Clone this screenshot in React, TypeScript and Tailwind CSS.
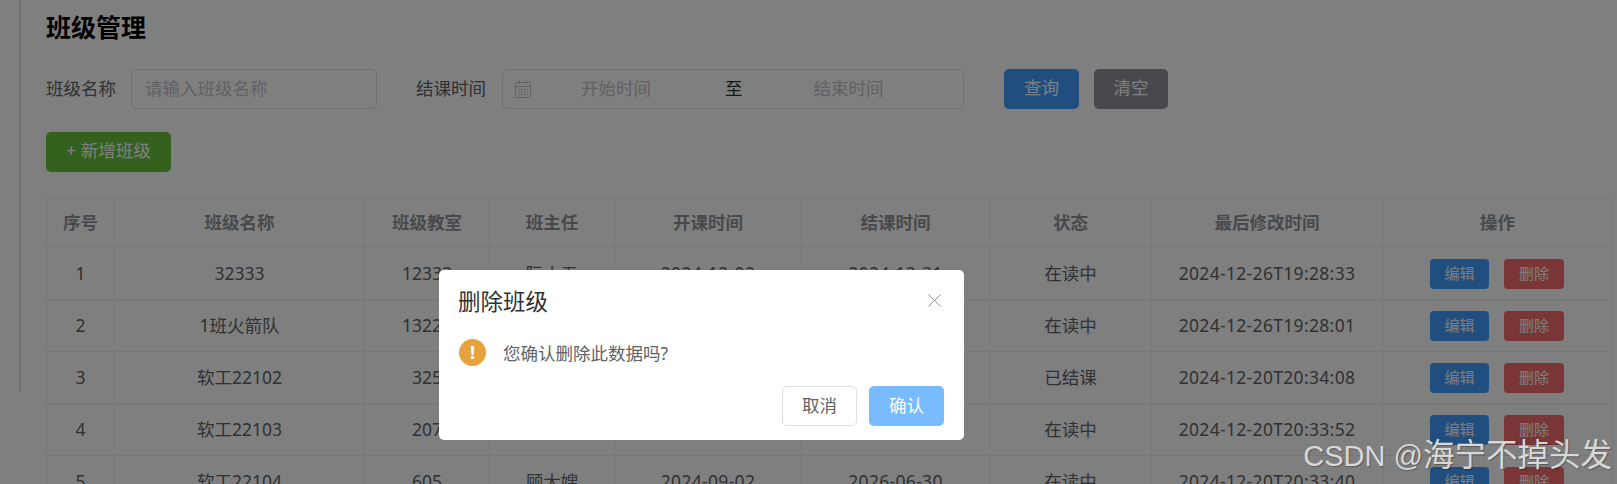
const cjk = "font-['Noto_Sans','Noto_Sans_CJK_SC',sans-serif]"

const columns = [
  { title: "序号", w: "w-[68px]" },
  { title: "班级名称", w: "w-[250px]" },
  { title: "班级教室", w: "w-[125px]" },
  { title: "班主任", w: "w-[125px]" },
  { title: "开课时间", w: "w-[187px]" },
  { title: "结课时间", w: "w-[188px]" },
  { title: "状态", w: "w-[162px]" },
  { title: "最后修改时间", w: "w-[231px]" },
  { title: "操作", w: "w-[230px]" },
]

const rows = [
  ["1", "32333", "12333", "阮小五", "2024-12-02", "2024-12-31", "在读中", "2024-12-26T19:28:33"],
  ["2", "1班火箭队", "13222", "阮小七", "2024-12-02", "2024-12-31", "在读中", "2024-12-26T19:28:01"],
  ["3", "软工22102", "325", "李逵", "2022-09-01", "2024-06-30", "已结课", "2024-12-20T20:34:08"],
  ["4", "软工22103", "207", "林冲", "2024-09-02", "2026-06-30", "在读中", "2024-12-20T20:33:52"],
  ["5", "软工22104", "605", "顾大嫂", "2024-09-02", "2026-06-30", "在读中", "2024-12-20T20:33:40"],
]

// date columns run a little wider in the reference
const dateCols = [4, 5, 7]

const App = () => {
  return (
    <div className={`relative h-[484px] w-[1617px] overflow-hidden bg-white ${cjk}`}>
      <div className="flex">
        <div className="h-[391px] w-[21px] shrink-0 border-r-2 border-[#dcdfe6]"></div>
        <div className="pl-[25px]">
          <h1 className="mt-[10px] text-[25px] leading-[34px] font-bold text-black">班级管理</h1>

          {/* Search */}
          <div className="mt-[25px] flex h-[40px] items-center text-[17.5px] text-[#606266]">
            <span className="pb-[1px]">班级名称</span>
            <div className="ml-[15px] flex h-[40px] w-[246px] items-center rounded-[5px] border border-[#dcdfe6] pb-[1px] pl-[13px] text-[#c0c4cc]">请输入班级名称</div>
            <span className="ml-[39px] pb-[1px]">结课时间</span>
            <div className="ml-[16px] flex h-[40px] w-[462px] items-center rounded-[5px] border border-[#dcdfe6] pb-[1px]">
              <svg className="ml-[12px] h-[18px] w-[16px]" viewBox="0 0 16 18" fill="none" stroke="#c0c4cc" strokeWidth="1">
                <rect x="0.5" y="2.5" width="15" height="15" rx="1" />
                <path d="M0.5 6.5h15M4.5 0.5v3M11.5 0.5v3" />
                <path d="M3 9.5h10M3 12h10M3 14.5h10" strokeDasharray="2 1" />
              </svg>
              <span className="ml-[50px] w-[70px] text-[#c0c4cc]">开始时间</span>
              <span className="ml-[74px] text-[#303133]">至</span>
              <span className="ml-[71px] w-[70px] text-[#c0c4cc]">结束时间</span>
            </div>
            <button className="ml-[40px] h-[40px] w-[75px] rounded-[5px] bg-[#409eff] pb-[3px] text-white">查询</button>
            <button className="ml-[15px] h-[40px] w-[74px] rounded-[5px] bg-[#909399] pb-[3px] text-white">清空</button>
          </div>

          <button className="mt-[23px] h-[40px] w-[125px] rounded-[5px] bg-[#67c23a] pb-[3px] text-[17.5px] text-white">+ 新增班级</button>

          {/* Table */}
          <table className="mt-[26px] table-fixed border-collapse text-center text-[17.5px] text-[#606266]">
            <thead>
              <tr className="h-[48px]">
                {columns.map((col) => (
                  <th key={col.title} className={`${col.w} border border-[#ebeef5] p-0 font-bold text-[#909399]`}>{col.title}</th>
                ))}
              </tr>
            </thead>
            <tbody>
              {rows.map((row) => (
                <tr key={row[0]} className={row[0] === "1" ? "h-[53px]" : "h-[52px]"}>
                  {row.map((cell, i) => (
                    <td key={i} className={`border border-[#ebeef5] p-0 ${dateCols.includes(i) ? "tracking-[0.32px]" : ""}`}>{cell}</td>
                  ))}
                  <td className="border border-[#ebeef5] p-0">
                    <div className={`flex justify-center gap-[15px] pr-[1px] ${row[0] === "1" ? "mt-[1px]" : ""}`}>
                      <button className="h-[30px] w-[59px] rounded-[4px] bg-[#409eff] text-[15px] text-white">编辑</button>
                      <button className="h-[30px] w-[60px] rounded-[4px] bg-[#f56c6c] text-[15px] text-white">删除</button>
                    </div>
                  </td>
                </tr>
              ))}
            </tbody>
          </table>
        </div>
      </div>

      {/* Mask and dialog */}
      <div className="absolute inset-0 bg-black/50"></div>
      <div className="absolute top-[270px] left-[439px] flex h-[170px] w-[525px] flex-col rounded-[5px] bg-white">
        <div className="flex items-center justify-between pt-[16px] pr-[23px] pl-[19px]">
          <span className="text-[22.5px] leading-[32px] text-[#303133]">删除班级</span>
          <svg className="mb-[4px] h-[13px] w-[13px]" viewBox="0 0 13 13" stroke="#909399" strokeWidth="1" fill="none">
            <path d="M0.5 0.5l12 12M12.5 0.5l-12 12" />
          </svg>
        </div>
        <div className="mt-[21px] flex items-center pl-[20px] text-[17.5px] text-[#606266]">
          <div className="flex h-[27px] w-[27px] items-center justify-center rounded-full bg-[#e6a23c] text-[18px] font-bold text-white">!</div>
          <span className="mt-[1px] ml-[17px]">您确认删除此数据吗?</span>
        </div>
        <div className="mt-auto flex justify-end gap-[12px] pr-[20px] pb-[14px] text-[17.5px]">
          <button className="h-[40px] w-[75px] rounded-[5px] border border-[#dcdfe6] pb-[1px] text-[#606266]">取消</button>
          <button className="h-[40px] w-[75px] rounded-[5px] bg-[#79bbff] pb-[1px] text-white">确认</button>
        </div>
      </div>

      {/* Watermark */}
      <div className="absolute top-[434px] right-[5px] flex items-baseline leading-[40px] whitespace-pre text-[#d8d8d8] [text-shadow:1px_1px_1px_rgba(0,0,0,0.3)]">
        <span className="font-['Liberation_Sans',sans-serif] text-[29px]">CSDN @</span>
        <span className="text-[31.5px]">海宁不掉头发</span>
      </div>
    </div>
  )
}

export default App
